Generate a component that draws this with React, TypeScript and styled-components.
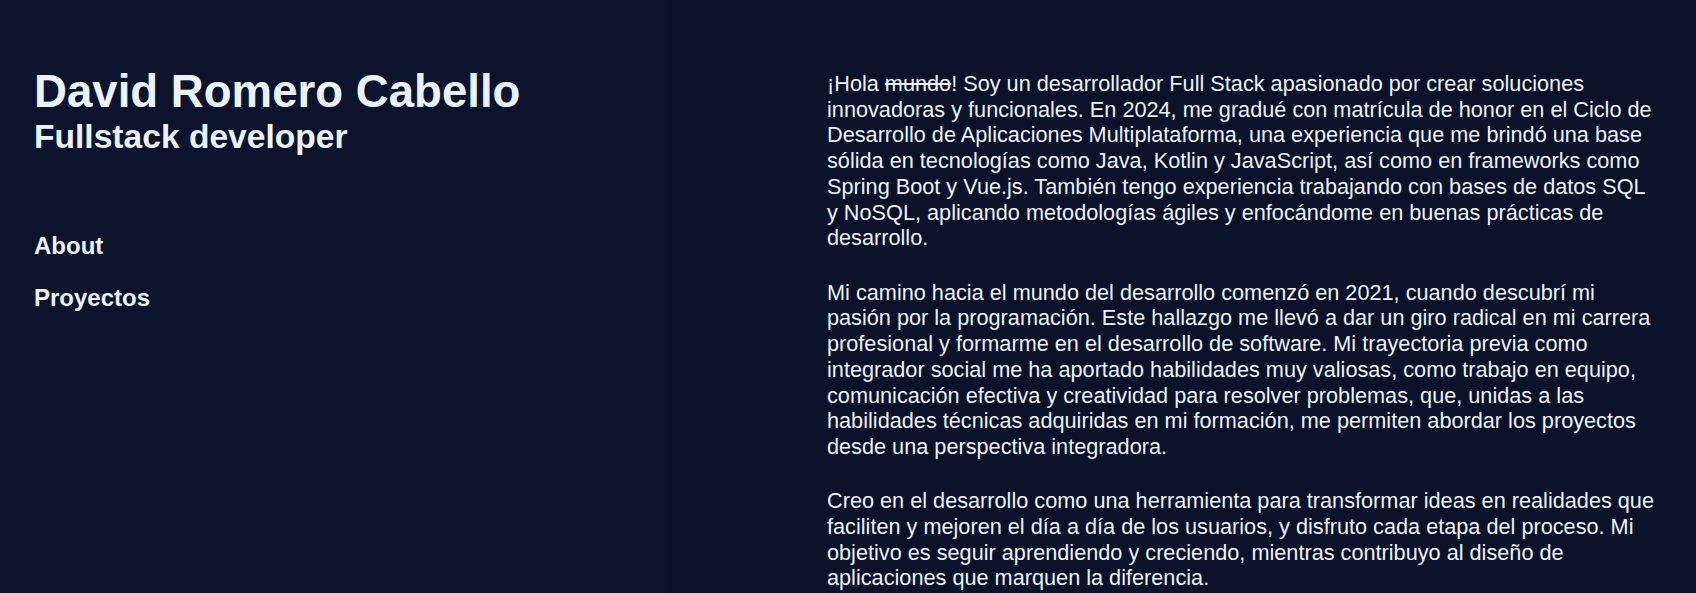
import * as React from "react";
import styled, { createGlobalStyle } from "styled-components";

const GlobalStyle = createGlobalStyle`
  html, body {
    margin: 0;
    padding: 0;
    background: #0a1229;
  }
  body {
    font-family: "Liberation Sans", Arial, sans-serif;
    color: #eaf2ff;
  }
`;

//two columns: fixed sidebar and the text area
const Page = styled.div`
  display: flex;
  flex-direction: row;
  min-height: 593px;
  background: #0a1229;
`;

const Sidebar = styled.header`
  width: 666px;
  flex-shrink: 0;
  box-sizing: border-box;
  padding: 66px 0 0 34px;
  background: #0b142c;
`;

const Name = styled.h1`
  margin: 0;
  font-size: 45.6px;
  font-weight: 700;
  line-height: normal;
`;

const Role = styled.h2`
  margin: 0;
  font-size: 33.6px;
  font-weight: 700;
  line-height: normal;
`;

const Nav = styled.nav`
  display: flex;
  flex-direction: column;
  gap: 24px;
  margin-top: 76px;
`;

const NavLink = styled.a`
  font-size: 24px;
  font-weight: 700;
  color: #eaf2ff;
  text-decoration: none;
  line-height: normal;
`;

const Main = styled.main`
  flex: 1;
  padding: 71px 0 0 161px;
`;

const Text = styled.div`
  width: 833px;
`;

const Para = styled.p`
  margin: 0 0 28.5px;
  font-size: 21.7px;
  line-height: 25.74px;
`;

function App() {
  return (
    <>
      <GlobalStyle />
      <Page>
        <Sidebar>
          <Name>David Romero Cabello</Name>
          <Role>Fullstack developer</Role>
          <Nav>
            <NavLink href="#about">About</NavLink>
            <NavLink href="#proyectos">Proyectos</NavLink>
          </Nav>
        </Sidebar>
        <Main>
          <Text>
            <Para>
              ¡Hola <s>mundo</s>! Soy un desarrollador Full Stack apasionado
              por crear soluciones innovadoras y funcionales. En 2024, me
              gradué con matrícula de honor en el Ciclo de Desarrollo de
              Aplicaciones Multiplataforma, una experiencia que me brindó una
              base sólida en tecnologías como Java, Kotlin y JavaScript, así
              como en frameworks como Spring Boot y Vue.js. También tengo
              experiencia trabajando con bases de datos SQL y NoSQL, aplicando
              metodologías ágiles y enfocándome en buenas prácticas de
              desarrollo.
            </Para>
            <Para>
              Mi camino hacia el mundo del desarrollo comenzó en 2021, cuando
              descubrí mi pasión por la programación. Este hallazgo me llevó a
              dar un giro radical en mi carrera profesional y formarme en el
              desarrollo de software. Mi trayectoria previa como integrador
              social me ha aportado habilidades muy valiosas, como trabajo en
              equipo, comunicación efectiva y creatividad para resolver
              problemas, que, unidas a las habilidades técnicas adquiridas en
              mi formación, me permiten abordar los proyectos desde una
              perspectiva integradora.
            </Para>
            <Para>
              Creo en el desarrollo como una herramienta para transformar ideas
              en realidades que faciliten y mejoren el día a día de los
              usuarios, y disfruto cada etapa del proceso. Mi objetivo es
              seguir aprendiendo y creciendo, mientras contribuyo al diseño de
              aplicaciones que marquen la diferencia.
            </Para>
          </Text>
        </Main>
      </Page>
    </>
  );
}

export default App;
